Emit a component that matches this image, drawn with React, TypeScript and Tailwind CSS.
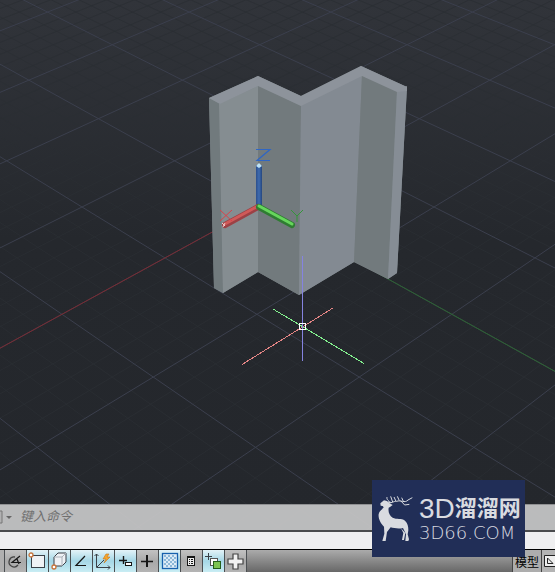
import type { ReactNode } from 'react';

type Point = [number, number];

const ORIGIN: Point = [258, 207];

// ground plane -> screen, i runs along the X axis and j along the Y axis
function project(i: number, j: number): Point {
  const s = i + j;
  const w = 1 - 0.0485 * s;
  return [ORIGIN[0] + (88 * (j - i) - 0.5 * s) / w, (ORIGIN[1] + 38.4 * s) / w];
}

const STEPS = Array.from({ length: 81 }, (_, n) => n - 40);

function GridLine({ from, to, major }: { from: Point; to: Point; major: boolean }) {
  return (
    <line
      x1={from[0]}
      y1={from[1]}
      x2={to[0]}
      y2={to[1]}
      stroke={major ? '#3b3f4d' : '#2b2e34'}
      strokeWidth={major ? 1 : 0.8}
    />
  );
}

function Grid() {
  const ordered = [...STEPS.filter((n) => n % 5 !== 0), ...STEPS.filter((n) => n % 5 === 0)];
  return (
    <g>
      {ordered.map((n) => {
        const k = n / 5;
        const major = n % 5 === 0;
        return (
          <g key={n}>
            <GridLine from={project(k, -10)} to={project(k, 9)} major={major} />
            <GridLine from={project(-10, k)} to={project(9, k)} major={major} />
          </g>
        );
      })}
    </g>
  );
}

function Scene() {
  const [xEnd, yEnd] = [project(8, 0), project(0, 8)];
  return (
    <svg
      viewBox="0 0 555 532"
      preserveAspectRatio="xMidYMid slice"
      className="absolute inset-0 h-full w-full"
      role="img"
      aria-label="3D model view"
    >
      <defs>
        <linearGradient id="sky" x1="0" y1="0" x2="0" y2="1">
          <stop offset="0" stopColor="#31343a" />
          <stop offset="0.45" stopColor="#25282d" />
          <stop offset="1" stopColor="#24272c" />
        </linearGradient>
        <linearGradient id="zAxis" x1="0" y1="0" x2="1" y2="0">
          <stop offset="0" stopColor="#2c4f8c" />
          <stop offset="0.5" stopColor="#3f6cb0" />
          <stop offset="1" stopColor="#25467e" />
        </linearGradient>
      </defs>
      <rect width="555" height="532" fill="url(#sky)" />
      <Grid />
      <line x1={ORIGIN[0]} y1={ORIGIN[1]} x2={xEnd[0]} y2={xEnd[1]} stroke="#7a2b33" />
      <line x1={ORIGIN[0]} y1={ORIGIN[1]} x2={yEnd[0]} y2={yEnd[1]} stroke="#2c6432" />

      {/* folded wall */}
      <g>
        <path
          d="M209 98L258 76L301 96L361 66L407 87L397 273L388 279L354 262L299 295L258 272L223 293L214 288Z"
          fill="#7b8387"
        />
        <path d="M209 98L220 104L223 293L214 288Z" fill="#717a7d" />
        <path d="M219 104L258 86V272L223 293Z" fill="#858d91" />
        <path d="M258 85L301 106L299 295L258 272Z" fill="#727a7d" />
        <path d="M301 105L362 75L354 262L299 295Z" fill="#838a92" />
        <path d="M362 75L397 91L388 279L354 262Z" fill="#727a7d" />
        <path d="M397 91L407 86L397 273L388 279Z" fill="#868d95" />
        <path
          d="M209 98L258 76L301 96L361 66L407 87V91L397 92L362 76L301 106L258 86L220 104Z"
          fill="#8d939b"
        />
      </g>

      {/* UCS icon */}
      <g fill="none">
        <rect x="256" y="165" width="6" height="42" fill="url(#zAxis)" />
        <path d="M256 166L259 163L262 166L259 168Z" fill="#bfe3f5" />
        <path d="M256 149.5H270L257 160.5H270" stroke="#2f66c4" strokeWidth="1.2" />
        <path d="M258 207L225 225" stroke="#9c4145" strokeWidth="6" strokeLinecap="round" />
        <path d="M258 206L225 224" stroke="#d05a59" strokeWidth="3" strokeLinecap="round" />
        <path d="M222 223L225 226M225 223L223 227" stroke="#f3c9c9" />
        <path d="M220 210L232 221M232 210L220 221" stroke="#d8434a" />
        <path d="M259 207L292 225" stroke="#2f7c32" strokeWidth="6" strokeLinecap="round" />
        <path d="M259 206L292 224" stroke="#66d65c" strokeWidth="3" strokeLinecap="round" />
        <path d="M291 210L297 216L303 210M297 216V222" stroke="#34953a" />
      </g>

      {/* crosshair */}
      <g fill="none" shapeRendering="crispEdges">
        <path d="M242 364.5L333 308" stroke="#e58585" />
        <path d="M273 309L364 363.5" stroke="#82ee8e" />
        <path d="M302.5 256V361" stroke="#8583e0" />
        <rect x="299.5" y="323.5" width="6" height="6" stroke="#ffffff" />
      </g>
    </svg>
  );
}

function CommandLine() {
  return (
    <form
      className="relative mt-auto flex h-7 items-center border-t border-b-2 border-t-[#8f9092] border-b-[#4a4b4d] bg-[#c3c3c4]/95 pb-0.5"
      onSubmit={(e) => e.preventDefault()}
    >
      <button type="button" aria-label="Recent commands" className="flex items-center">
        <svg width="14" height="14" viewBox="0 0 14 14">
          <path d="M0 1H2V13H0" fill="#b1b1b2" stroke="#777" />
          <path d="M6 6H12L9 9Z" fill="#666" />
        </svg>
      </button>
      <input
        aria-label="命令"
        placeholder="键入命令"
        className="ml-1.5 min-w-0 flex-1 bg-transparent font-['Liberation_Sans','Noto_Sans_CJK_SC',sans-serif] text-[13px] text-[#555] italic outline-none placeholder:text-[#707070]"
      />
    </form>
  );
}

function StatusButton({ label, on = false, children }: { label: string; on?: boolean; children: ReactNode }) {
  return (
    <button
      type="button"
      aria-label={label}
      aria-pressed={on}
      className={`flex w-[22px] shrink-0 items-center justify-center border-r border-[#4b4f52] ${
        on
          ? 'bg-linear-to-b from-[#e3f3f8] via-[#a5d7e6] to-[#c9edf4]'
          : 'bg-linear-to-b from-[#c2c2c2] via-[#a9a9a9] to-[#b4b4b4]'
      }`}
    >
      <svg width="21" height="21" viewBox="0 0 21 21" fill="none" stroke="#161616">
        {children}
      </svg>
    </button>
  );
}

function StatusBar() {
  return (
    <div className="flex h-[23px] items-stretch overflow-hidden border-t border-black bg-linear-to-b from-[#ababab] to-[#686868]">
      <div className="w-[5px] shrink-0 border-r border-[#4b4f52] bg-[#b0b0b0]" />
      <StatusButton label="Polar tracking">
        <path d="M13 14A5 5 0 1 1 10 6" stroke="#444" strokeWidth="1.3" />
        <path d="M15 5L7 11.5H16M12 8L14 13" strokeWidth="1.2" />
      </StatusButton>
      <StatusButton label="Object snap" on>
        <rect x="4.5" y="4.5" width="13" height="12" fill="#eef2f5" stroke="#3a4148" />
        <circle cx="4" cy="4" r="2" fill="#fff" stroke="#c8743c" strokeWidth="1.3" />
      </StatusButton>
      <StatusButton label="3D object snap" on>
        <path d="M5 6L9 2H17V11L13 15H5Z" fill="#eef1f5" stroke="#3a4148" />
        <path d="M5 6H13V15M13 6L17 2" stroke="#a9b0b8" />
        <circle cx="5" cy="16" r="2" fill="#fff" stroke="#c8743c" strokeWidth="1.3" />
      </StatusButton>
      <StatusButton label="Object snap tracking" on>
        <path d="M14 5L5 14.5H15" strokeWidth="1.2" />
      </StatusButton>
      <StatusButton label="Dynamic UCS" on>
        <path d="M3.5 3V16.5H17M1.5 5L3.5 3L5.5 5M15 14.5L17 16.5L15 18.5M4 16L11 9" stroke="#3a4148" />
        <path d="M13 3L10 8H13L11 12L17 6H14L16 3Z" fill="#f5a52c" stroke="#c8771b" strokeWidth="0.6" />
      </StatusButton>
      <StatusButton label="Dynamic input" on>
        <path d="M4 9.5H12M8.5 5V13" strokeWidth="1.4" />
        <rect x="10.5" y="11.5" width="6" height="3" fill="#fff" />
      </StatusButton>
      <StatusButton label="Lineweight">
        <path d="M4 10.5H11M10 10.5H16" strokeWidth="1.5" />
        <path d="M10 4V16" strokeWidth="2" />
      </StatusButton>
      <StatusButton label="Transparency" on>
        <rect x="3.5" y="2.5" width="15" height="15" fill="#dcebf6" stroke="#1761ad" strokeWidth="1.3" />
        <path d="M5 5H17M5 9H17M5 13H17" stroke="#8cb8d8" strokeWidth="2" strokeDasharray="2 2" />
        <path d="M7 7H17M7 11H17M7 15H17" stroke="#8cb8d8" strokeWidth="2" strokeDasharray="2 2" />
      </StatusButton>
      <StatusButton label="Quick properties">
        <rect x="6.5" y="5.5" width="7" height="9" fill="#eee" />
        <path d="M7 6.5H13M8 8.5H9M10 8.5H12M8 10.5H9M10 10.5H12M8 12.5H9M10 12.5H12" />
      </StatusButton>
      <StatusButton label="Selection cycling" on>
        <path d="M2 5.5H9M5.5 2V9" stroke="#3a4148" />
        <rect x="7.5" y="7.5" width="7" height="7" fill="#fff" stroke="#555" />
        <rect x="10.5" y="10.5" width="7" height="7" fill="#7cc452" stroke="#245f1c" />
      </StatusButton>
      <StatusButton label="Annotation monitor">
        <path d="M8 3H13V8H18V13H13V18H8V13H3V8H8Z" fill="#f1f1f1" stroke="#444" strokeWidth="1.2" />
      </StatusButton>
      <div className="flex-1" />
      <button
        type="button"
        className="w-[30px] shrink-0 border-x border-[#444] bg-[#adadad] pt-1 font-['Liberation_Sans','Noto_Sans_CJK_SC',sans-serif] text-xs leading-4 text-black"
      >
        模型
      </button>
      <button type="button" aria-label="Layout" className="w-[13px] shrink-0 overflow-hidden bg-[#b4b4b4]">
        <svg width="13" height="21" viewBox="0 0 13 21" fill="none" stroke="#222">
          <path d="M14 4.5H2.5V15.5H14" fill="#eee" />
          <path d="M5.5 7V12.5H11Z" />
        </svg>
      </button>
    </div>
  );
}

function Deer() {
  return (
    <svg width="35" height="47" viewBox="28 54 105 141" className="shrink-0">
      <path
        d="M35 79L46 70L55 72L63 79L72 84L64 90L60 92C58 104 62 116 72 122C84 128 98 122 109 131C117 138 119 148 119 160L117 172L121 187L119 192H110L112 172L103 153C92 156 76 154 66 151L55 165L51 192H41L47 170L46 149C36 139 28 124 30 111C32 100 42 97 45 91L42 87L36 86Z"
        fill="#d9dbe0"
      />
      <path d="M97 154L104 168L100 189H106L110 168Z" fill="#d9dbe0" />
      <path
        d="M58 74C66 82 74 72 84 73C96 68 108 80 118 69L131 62M66 76C56 70 54 66 55 60M72 75L66 58M82 73L76 60M92 71L86 58M104 73L99 62M96 71L108 84L122 82"
        fill="none"
        stroke="#d9dbe0"
        strokeWidth="3"
      />
    </svg>
  );
}

function Watermark() {
  return (
    <div className="absolute right-[30px] bottom-[15px] flex h-[77px] w-[153px] items-center gap-1.5 bg-[#212e57] pl-1.5 text-[#d9dbe0]">
      <Deer />
      <div className="whitespace-nowrap">
        <div className="flex items-center font-['Liberation_Sans','Noto_Sans_CJK_SC',sans-serif] text-[22px] leading-7 font-bold">
          <span className="text-[28px] font-normal">3D</span>溜溜网
        </div>
        <div className="font-['DejaVu_Sans',sans-serif] text-lg leading-5 font-extralight">3D66.COM</div>
      </div>
    </div>
  );
}

export default function App() {
  return (
    <div className="relative flex min-h-screen flex-col overflow-hidden bg-[#24272c]">
      <main className="relative flex flex-1 flex-col">
        <Scene />
        <CommandLine />
      </main>
      <div className="h-[17px] bg-[#efeff0]" />
      <StatusBar />
      <Watermark />
    </div>
  );
}
